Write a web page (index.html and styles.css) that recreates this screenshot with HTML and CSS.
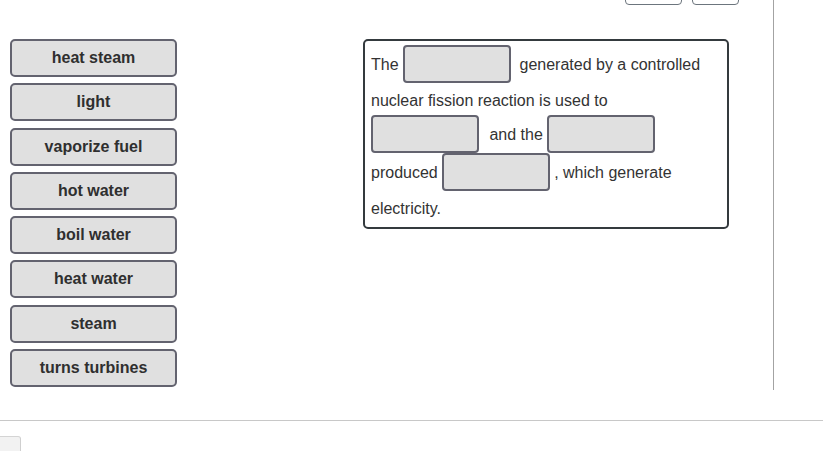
FILE: index.html
```html
<!DOCTYPE html>
<html lang="en">
<head>
<meta charset="utf-8">
<title>Drag and drop</title>
<link rel="stylesheet" href="styles.css">
</head>
<body>
<div class="panel">
  <div class="toolbar">
    <button class="tool tool-wide" type="button"></button>
    <button class="tool tool-narrow" type="button"></button>
  </div>
  <div class="workspace">
    <div class="bank">
      <div class="tile">heat steam</div>
      <div class="tile">light</div>
      <div class="tile">vaporize fuel</div>
      <div class="tile">hot water</div>
      <div class="tile">boil water</div>
      <div class="tile">heat water</div>
      <div class="tile">steam</div>
      <div class="tile">turns turbines</div>
    </div>
    <div class="sentence"><span class="words">The</span> <span class="blank"></span> <span class="words">generated by a controlled</span> <span class="words">nuclear fission reaction is used to</span> <span class="blank blank-first"></span> <span class="words">and the</span> <span class="blank"></span> <span class="words">produced</span> <span class="blank"></span><span class="words">, which generate</span> <span class="words">electricity.</span></div>
  </div>
</div>
<div class="divider"></div>
<div class="footer-tab"></div>
</body>
</html>
```

FILE: styles.css
```css
html, body {
  margin: 0;
  padding: 0;
  background: #ffffff;
  font-family: "Liberation Sans", Arial, sans-serif;
  color: #333333;
  overflow: hidden;
}

.panel {
  width: 739px;
  height: 390px;
  padding-right: 34px;
  border-right: 1px solid #a3a3a3;
}

.toolbar {
  display: flex;
  justify-content: flex-end;
  align-items: flex-end;
  gap: 10px;
  height: 5px;
}

.tool {
  flex: none;
  height: 30px;
  padding: 0;
  background: #ffffff;
  border: 1px solid #6c757d;
  border-radius: 4px;
}

.tool-wide {
  width: 57px;
}

.tool-narrow {
  width: 47px;
}

.workspace {
  display: flex;
  align-items: flex-start;
  gap: 186px;
  margin-top: 34px;
  padding-left: 10px;
}

.bank {
  display: flex;
  flex-direction: column;
  gap: 6.3px;
  width: 167px;
}

.tile {
  box-sizing: border-box;
  height: 38px;
  display: flex;
  align-items: center;
  justify-content: center;
  background: #e0e0e0;
  border: 2px solid #63636f;
  border-radius: 5px;
  font-size: 16px;
  font-weight: bold;
  color: #2f2f2f;
}

.sentence {
  box-sizing: border-box;
  width: 366px;
  padding: 4px 6px;
  border: 2px solid #343a3e;
  border-radius: 5px;
  font-size: 16px;
  line-height: 32px;
  color: #333333;
}

.words {
  line-height: 24px;
  vertical-align: -2px;
}

.blank {
  display: inline-block;
  box-sizing: border-box;
  width: 108px;
  height: 38px;
  margin: 0 4px 0 0;
  vertical-align: middle;
  background: #e0e0e0;
  border: 2px solid #63636f;
  border-radius: 4px;
}

.blank-first {
  margin-right: 6px;
}

.divider {
  margin-top: 30px;
  height: 1px;
  background: #c8c8c8;
}

.footer-tab {
  box-sizing: border-box;
  width: 21px;
  height: 20px;
  margin-top: 15px;
  background: #f2f2f2;
  border-top: 1px solid #d4d4d4;
  border-right: 1px solid #cfcfcf;
  border-radius: 0 3px 0 0;
}
```
